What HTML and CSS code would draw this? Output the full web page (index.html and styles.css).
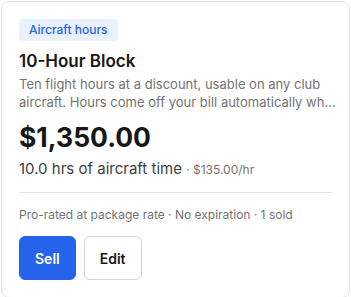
FILE: index.html
```html
<!DOCTYPE html>
<html>
<head>
<meta charset="utf-8">
<link rel="stylesheet" href="styles.css">
</head>
<body>
<div class="card">
  <span class="badge">Aircraft hours</span>
  <h2 class="title">10-Hour Block</h2>
  <p class="desc"><span class="desc-line">Ten flight hours at a discount, usable on any club</span><span class="desc-line desc-last">aircraft. Hours come off your bill automatically when you fly a club aircraft.</span></p>
  <div class="price">$1,350.00</div>
  <div class="sub">10.0 hrs of aircraft time <span class="rate">· $135.00/hr</span></div>
  <div class="divider"></div>
  <div class="meta">Pro-rated at package rate · No expiration · 1 sold</div>
  <div class="actions">
    <button class="btn btn-primary">Sell</button>
    <button class="btn btn-secondary">Edit</button>
  </div>
</div>
</body>
</html>
```
FILE: styles.css
```css
* { box-sizing: border-box; }
html, body { margin: 0; padding: 0; background: #fff; }
body {
  font-family: Inter, "Noto Sans", sans-serif;
  color: #171717;
  padding: 1px 1px 0 1px;
}
.card {
  border: 1px solid #e5e5e5;
  border-radius: 8px;
  padding: 17px;
  min-height: 295px;
  display: flex;
  flex-direction: column;
  align-items: flex-start;
}
.card > * { flex-shrink: 0; }
.badge {
  display: inline-block;
  background: #eaf0fd;
  color: #2563eb;
  font-size: 12px;
  font-weight: 500;
  line-height: 22px;
  padding: 0 10px;
  border-radius: 4px;
}
.title {
  margin: 8px 0 0;
  font-size: 17px;
  font-weight: 600;
  line-height: 24px;
}
.desc {
  margin: 2px 0 0;
  font-size: 13px;
  line-height: 18px;
  color: #737373;
  width: 100%;
}
.desc-line {
  display: block;
}
.desc-last {
  white-space: nowrap;
  overflow: hidden;
  text-overflow: ellipsis;
  margin-right: -6px;
}
.price {
  margin-top: 9px;
  font-size: 26.5px;
  font-weight: 700;
  line-height: 34px;
}
.sub {
  margin-top: 5px;
  font-size: 15px;
  line-height: 20px;
  color: #404040;
}
.rate {
  font-size: 12px;
  color: #737373;
}
.divider {
  align-self: stretch;
  height: 1px;
  background: #e5e5e5;
  margin-top: 12px;
}
.meta {
  margin-top: 14px;
  font-size: 12px;
  line-height: 16px;
  color: #737373;
}
.actions {
  margin-top: 13px;
  display: flex;
  gap: 8px;
}
.btn {
  font-family: inherit;
  font-size: 14px;
  font-weight: 600;
  height: 44px;
  border-radius: 6px;
  padding: 0 15px;
  cursor: pointer;
}
.btn-primary {
  background: #2563eb;
  color: #fff;
  border: 1px solid #2563eb;
}
.btn-secondary {
  background: #fff;
  color: #171717;
  border: 1px solid #d4d4d4;
}
```
